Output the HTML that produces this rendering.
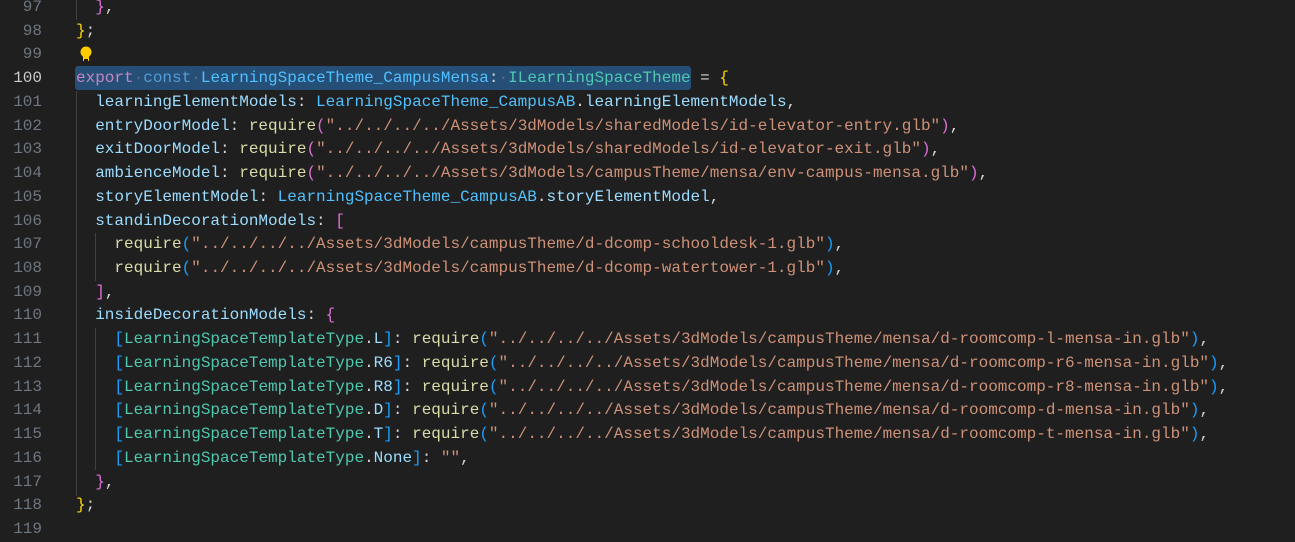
<!DOCTYPE html>
<html><head><meta charset="utf-8"><style>
body{margin:0;width:1295px;height:539px;background:#1f1f1f;overflow:hidden;font-family:"Liberation Mono",monospace;font-size:16px;}
.ln{position:absolute;left:0;width:42px;text-align:right;color:#6e7681;height:23.73px;line-height:23.73px}
.cl{position:absolute;left:76px;white-space:pre;height:23.73px;line-height:23.73px;color:#d4d4d4}
.g{position:absolute;width:1px;background:#404040}
.k{color:#c586c0}.b{color:#569cd6}.v{color:#4fc1ff}.t{color:#4ec9b0}.p{color:#9cdcfe}.f{color:#dcdcaa}.s{color:#ce9178}
.y{color:#ffd700}.m{color:#da70d6}.u{color:#179fff}.w{color:#5a6f85}
</style></head><body>
<div style="position:absolute;left:75px;top:66px;width:616px;height:24px;background:#264f78;border-radius:3px"></div>
<div class="g" style="left:76px;top:-4px;height:24px"></div>
<div class="g" style="left:76px;top:91px;height:405px"></div>
<div class="g" style="left:95px;top:233px;height:48px"></div>
<div class="g" style="left:95px;top:328px;height:142px"></div>
<svg style="position:absolute;left:79px;top:45px" width="14" height="20" viewBox="0 0 14 20"><circle cx="7" cy="7" r="5.5" fill="#ffcc00"/><rect x="4" y="10" width="6" height="6" fill="#ffcc00"/><rect x="5" y="14" width="4" height="3" fill="#1f1f1f"/></svg>
<div id="c"></div>
<script>
const L=[
['97','  <span class="m">}</span>,'],
['98','<span class="y">}</span>;'],
['99',''],
['100','<span class="k">export</span><span class="w">·</span><span class="b">const</span><span class="w">·</span><span class="v">LearningSpaceTheme_CampusMensa</span>:<span class="w">·</span><span class="t">ILearningSpaceTheme</span> = <span class="y">{</span>'],
['101','  <span class="p">learningElementModels</span>: <span class="v">LearningSpaceTheme_CampusAB</span>.<span class="p">learningElementModels</span>,'],
['102','  <span class="p">entryDoorModel</span>: <span class="f">require</span><span class="m">(</span><span class="s">"../../../../Assets/3dModels/sharedModels/id-elevator-entry.glb"</span><span class="m">)</span>,'],
['103','  <span class="p">exitDoorModel</span>: <span class="f">require</span><span class="m">(</span><span class="s">"../../../../Assets/3dModels/sharedModels/id-elevator-exit.glb"</span><span class="m">)</span>,'],
['104','  <span class="p">ambienceModel</span>: <span class="f">require</span><span class="m">(</span><span class="s">"../../../../Assets/3dModels/campusTheme/mensa/env-campus-mensa.glb"</span><span class="m">)</span>,'],
['105','  <span class="p">storyElementModel</span>: <span class="v">LearningSpaceTheme_CampusAB</span>.<span class="p">storyElementModel</span>,'],
['106','  <span class="p">standinDecorationModels</span>: <span class="m">[</span>'],
['107','    <span class="f">require</span><span class="u">(</span><span class="s">"../../../../Assets/3dModels/campusTheme/d-dcomp-schooldesk-1.glb"</span><span class="u">)</span>,'],
['108','    <span class="f">require</span><span class="u">(</span><span class="s">"../../../../Assets/3dModels/campusTheme/d-dcomp-watertower-1.glb"</span><span class="u">)</span>,'],
['109','  <span class="m">]</span>,'],
['110','  <span class="p">insideDecorationModels</span>: <span class="m">{</span>'],
];
const T=[['111','L','l'],['112','R6','r6'],['113','R8','r8'],['114','D','d'],['115','T','t']];
T.forEach(a=>L.push([a[0],'    <span class="u">[</span><span class="t">LearningSpaceTemplateType</span>.<span class="p">'+a[1]+'</span><span class="u">]</span>: <span class="f">require</span><span class="u">(</span><span class="s">"../../../../Assets/3dModels/campusTheme/mensa/d-roomcomp-'+a[2]+'-mensa-in.glb"</span><span class="u">)</span>,']));
L.push(['116','    <span class="u">[</span><span class="t">LearningSpaceTemplateType</span>.<span class="p">None</span><span class="u">]</span>: <span class="s">""</span>,']);
L.push(['117','  <span class="m">}</span>,']);
L.push(['118','<span class="y">}</span>;']);
L.push(['119','']);
let h='';
L.forEach((l,i)=>{const top=(-4+i*23.73).toFixed(2);
h+='<div class="ln" style="top:'+top+'px'+(l[0]=='100'?';color:#cccccc':'')+'">'+l[0]+'</div><div class="cl" style="top:'+top+'px">'+l[1]+'</div>';});
document.getElementById('c').innerHTML=h;
</script>
</body></html>
